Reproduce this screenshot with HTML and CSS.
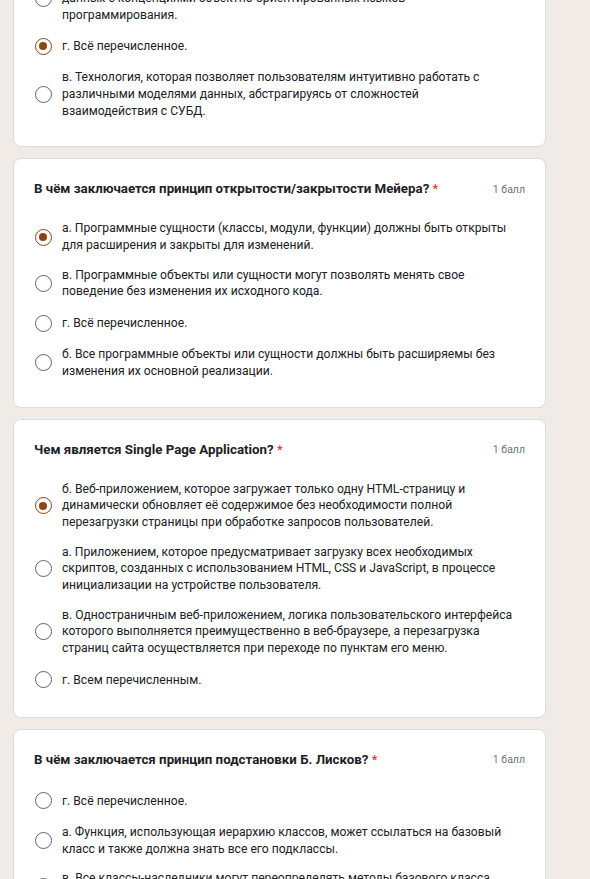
FILE: index.html
```html
<!DOCTYPE html>
<html lang="ru">
<head>
<meta charset="utf-8">
<title>Тест</title>
<link rel="stylesheet" href="styles.css">
</head>
<body>
<main class="form">
  <section class="card">
    <div class="q-head">
      <h2 class="q-title">Что такое ORM? <span class="req">*</span></h2>
      <span class="points">1 балл</span>
    </div>
    <div class="options">
      <label class="opt"><span class="radio"></span><span class="opt-text">б. Язык запросов, который используется для получения данных<br>из реляционных баз данных.</span></label>
      <label class="opt"><span class="radio"></span><span class="opt-text">а. Технология программирования, которая позволяет связывать базы<br>данных с концепциями объектно-ориентированных языков<br>программирования.</span></label>
      <label class="opt"><span class="radio checked"></span><span class="opt-text">г. Всё перечисленное.</span></label>
      <label class="opt"><span class="radio"></span><span class="opt-text">в. Технология, которая позволяет пользователям интуитивно работать с<br>различными моделями данных, абстрагируясь от сложностей<br>взаимодействия с СУБД.</span></label>
    </div>
  </section>

  <section class="card">
    <div class="q-head">
      <h2 class="q-title">В чём заключается принцип открытости/закрытости Мейера? <span class="req">*</span></h2>
      <span class="points">1 балл</span>
    </div>
    <div class="options">
      <label class="opt"><span class="radio checked"></span><span class="opt-text">а. Программные сущности (классы, модули, функции) должны быть открыты<br>для расширения и закрыты для изменений.</span></label>
      <label class="opt"><span class="radio"></span><span class="opt-text">в. Программные объекты или сущности могут позволять менять свое<br>поведение без изменения их исходного кода.</span></label>
      <label class="opt"><span class="radio"></span><span class="opt-text">г. Всё перечисленное.</span></label>
      <label class="opt"><span class="radio"></span><span class="opt-text">б. Все программные объекты или сущности должны быть расширяемы без<br>изменения их основной реализации.</span></label>
    </div>
  </section>

  <section class="card">
    <div class="q-head">
      <h2 class="q-title">Чем является Single Page Application? <span class="req">*</span></h2>
      <span class="points">1 балл</span>
    </div>
    <div class="options">
      <label class="opt"><span class="radio checked"></span><span class="opt-text">б. Веб-приложением, которое загружает только одну HTML-страницу и<br>динамически обновляет её содержимое без необходимости полной<br>перезагрузки страницы при обработке запросов пользователей.</span></label>
      <label class="opt"><span class="radio"></span><span class="opt-text">а. Приложением, которое предусматривает загрузку всех необходимых<br>скриптов, созданных с использованием HTML, CSS и JavaScript, в процессе<br>инициализации на устройстве пользователя.</span></label>
      <label class="opt"><span class="radio"></span><span class="opt-text">в. Одностраничным веб-приложением, логика пользовательского интерфейса<br>которого выполняется преимущественно в веб-браузере, а перезагрузка<br>страниц сайта осуществляется при переходе по пунктам его меню.</span></label>
      <label class="opt"><span class="radio"></span><span class="opt-text">г. Всем перечисленным.</span></label>
    </div>
  </section>

  <section class="card">
    <div class="q-head">
      <h2 class="q-title">В чём заключается принцип подстановки Б. Лисков? <span class="req">*</span></h2>
      <span class="points">1 балл</span>
    </div>
    <div class="options">
      <label class="opt"><span class="radio"></span><span class="opt-text">г. Всё перечисленное.</span></label>
      <label class="opt"><span class="radio"></span><span class="opt-text">а. Функция, использующая иерархию классов, может ссылаться на базовый<br>класс и также должна знать все его подклассы.</span></label>
      <label class="opt"><span class="radio"></span><span class="opt-text">в. Все классы-наследники могут переопределять методы базового класса<br>без изменения его поведения.</span></label>
      <label class="opt"><span class="radio"></span><span class="opt-text">б. Объекты в программе должны быть заменяемыми на экземпляры их<br>подтипов без изменения правильности выполнения программы.</span></label>
    </div>
  </section>
</main>
</body>
</html>
```

FILE: styles.css
```css
html, body {
  margin: 0;
  padding: 0;
}

body {
  background: #f0ebe6;
  font-family: Roboto, "Noto Sans", sans-serif;
  color: #202124;
  overflow: hidden;
}

.form {
  width: 533px;
  margin: -135.3px 0 0 13px;
  display: flex;
  flex-direction: column;
  gap: 11px;
}

.card {
  background: #fff;
  border: 1px solid #dadce0;
  border-radius: 8px;
  padding: 20px 20px 27px 20px;
}

.q-head {
  display: flex;
  justify-content: space-between;
  align-items: center;
  height: 20px;
  margin-bottom: 21px;
}

.q-title {
  margin: 0;
  font-size: 13.3px;
  font-weight: 700;
  line-height: 20px;
  color: #202124;
}

.req {
  color: #d93025;
  font-weight: 400;
}

.points {
  font-size: 10.5px;
  color: #70757a;
}

.options {
  display: flex;
  flex-direction: column;
  gap: 13px;
}

.opt {
  display: flex;
  align-items: center;
  min-height: 20px;
}

.radio {
  flex: none;
  box-sizing: border-box;
  width: 17px;
  height: 17px;
  margin-left: 0.5px;
  margin-right: 10.5px;
  border: 1.6px solid #5f6368;
  border-radius: 50%;
  position: relative;
}

.radio.checked {
  border-color: #8b4513;
}

.radio.checked::after {
  content: "";
  position: absolute;
  left: 50%;
  top: 50%;
  width: 8px;
  height: 8px;
  margin: -4px 0 0 -4px;
  border-radius: 50%;
  background: #8b4513;
}

.opt-text {
  font-size: 12.15px;
  line-height: 16.7px;
  color: #202124;
}
```
